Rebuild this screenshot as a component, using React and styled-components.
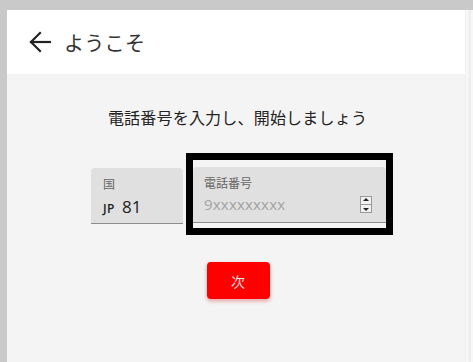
import React from 'react'
import styled, { createGlobalStyle } from 'styled-components'

const GlobalStyle = createGlobalStyle`
html, body {
    margin: 0;
    padding: 0;
    background: #c9c9c9;
    font-family: "Open Sans", "Noto Sans CJK JP", sans-serif;
}
`

const Page = styled.div`
display: flex;
flex-direction: row;
padding: 10px 0 0 7px;
height: 352px;
overflow: hidden;
`

const Panel = styled.div`
width: 458px;
display: flex;
flex-direction: column;
background-color: #f4f4f4;
`

const Track = styled.div`
width: 8px;
background: linear-gradient(to right, #e4e4e4 0, #fafafa 1px, #f2f2f2 4px, #e8e8e8 5px, #f7f7f7 6px);
`

const Header = styled.div`
height: 64px;
background-color: #ffffff;
display: flex;
align-items: center;
padding-left: 22px;
gap: 13px;
`

const BackButton = styled.span`
display: flex;
color: #222;
cursor: pointer;
`

const HeaderTitle = styled.h1`
margin: 0;
font-size: 20px;
font-weight: 400;
color: #333;
letter-spacing: 0.3px;
`

const Body = styled.div`
display: flex;
flex-direction: column;
align-items: center;
padding-top: 34px;
`

const Lead = styled.p`
margin: 0 0 0 3px;
font-size: 16px;
line-height: 20px;
letter-spacing: 0.2px;
color: #222;
`

const FormRow = styled.div`
display: flex;
flex-direction: row;
align-items: flex-start;
gap: 3px;
margin-top: 25px;
padding-left: 12px;
`

const Field = styled.div`
width: ${props => props.width};
height: 56px;
box-sizing: border-box;
background-color: #e0e0e0;
border-radius: 4px 4px 0 0;
border-bottom: 1px solid #8c8c8c;
padding: 9px 12px 0 ${props => props.pad || '12px'};
margin-top: ${props => props.offset || '0'};
display: flex;
flex-direction: column;
position: relative;
`

const Label = styled.span`
font-size: 12px;
line-height: 15px;
color: #666;
`

const Value = styled.div`
display: flex;
align-items: baseline;
gap: 7px;
margin-top: 3px;
color: #222;
`

const Code = styled.span`
font-size: 12px;
font-weight: 600;
letter-spacing: 0.5px;
`

const Number = styled.span`
font-size: 17px;
`

const Placeholder = styled.span`
margin-top: 3px;
font-size: 15px;
color: #a3a3a3;
letter-spacing: 0.2px;
`

const Highlight = styled.div`
border: 7px solid #000;
padding: 7px 0 5px 0;
background-color: #f4f4f4;
`

const Spinner = styled.div`
position: absolute;
right: 14px;
top: 29px;
width: 10px;
height: 15px;
border: 1px solid #9a9a9a;
background: #f0f0f0;
display: flex;
flex-direction: column;
justify-content: space-around;
align-items: center;
`

const Arrow = styled.span`
width: 0;
height: 0;
border-left: 3px solid transparent;
border-right: 3px solid transparent;
${props => props.down ? 'border-top: 3px solid #222;' : 'border-bottom: 3px solid #222;'}
`

const Divider = styled.span`
width: 100%;
height: 1px;
background: #9a9a9a;
`

const NextButton = styled.button`
margin: 27px 0 0 4px;
width: 63px;
height: 37px;
border: none;
border-radius: 4px;
background-color: #ff0000;
color: #ffe8e8;
font-family: "Noto Sans CJK JP", sans-serif;
font-size: 14px;
box-shadow: 0 2px 4px rgba(200, 0, 0, 0.35);
cursor: pointer;
`

const App = () => {
    return (
        <>
            <GlobalStyle />
            <Page>
                <Panel>
                    <Header>
                        <BackButton>
                            <svg width="22" height="22" viewBox="0 0 22 22" fill="none" stroke="currentColor" strokeWidth="2.2" strokeLinecap="square">
                                <line x1="2" y1="11" x2="21" y2="11" />
                                <polyline points="11,2 2,11 11,20" />
                            </svg>
                        </BackButton>
                        <HeaderTitle>ようこそ</HeaderTitle>
                    </Header>
                    <Body>
                        <Lead>電話番号を入力し、開始しましょう</Lead>
                        <FormRow>
                            <Field width="92px" offset="15px">
                                <Label>国</Label>
                                <Value>
                                    <Code>JP</Code>
                                    <Number>81</Number>
                                </Value>
                            </Field>
                            <Highlight>
                                <Field width="193px" pad="11px">
                                    <Label>電話番号</Label>
                                    <Placeholder>9xxxxxxxxx</Placeholder>
                                    <Spinner>
                                        <Arrow />
                                        <Divider />
                                        <Arrow down />
                                    </Spinner>
                                </Field>
                            </Highlight>
                        </FormRow>
                        <NextButton>次</NextButton>
                    </Body>
                </Panel>
                <Track />
            </Page>
        </>
    )
}

export default App
